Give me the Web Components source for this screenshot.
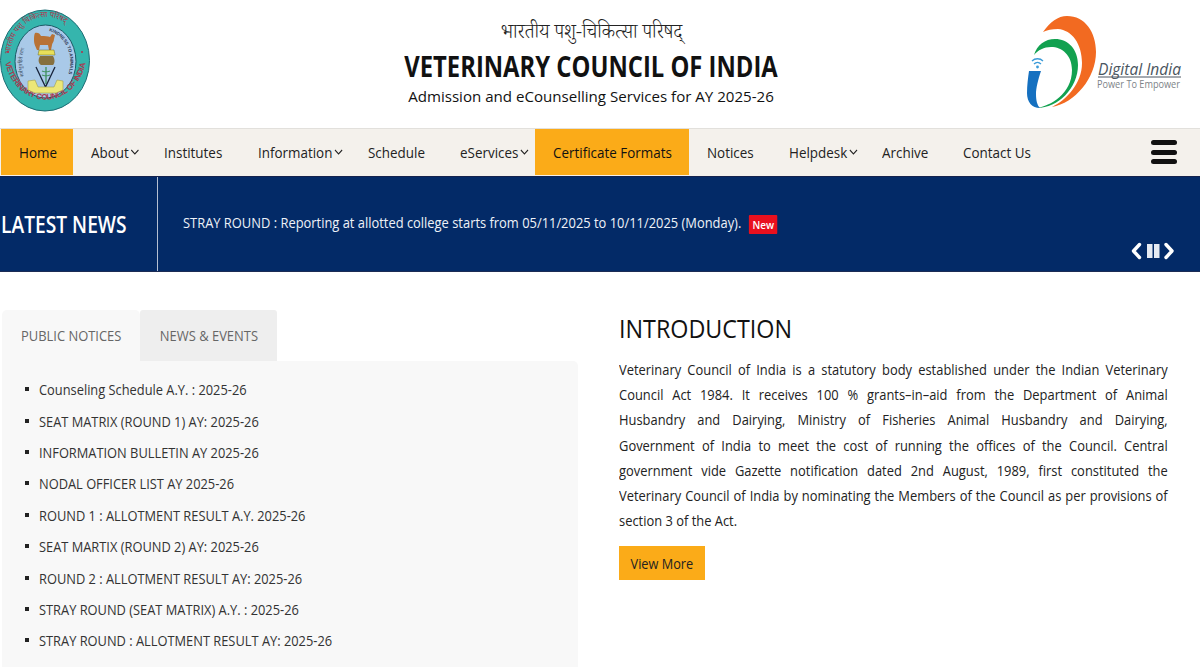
<!DOCTYPE html>
<html lang="en">
<head>
<meta charset="utf-8">
<title>Veterinary Council of India</title>
<style>
html, body { margin: 0; height: 100%; overflow: hidden; background: #fff; }
body { font-family: "Open Sans", "Noto Sans", sans-serif; color: #111; }
</style>
</head>
<body>
<vci-header></vci-header>
<vci-nav>
  <vci-nav-item w="72" accent>Home</vci-nav-item>
  <vci-nav-item w="73" caret>About</vci-nav-item>
  <vci-nav-item w="94">Institutes</vci-nav-item>
  <vci-nav-item w="110" caret>Information</vci-nav-item>
  <vci-nav-item w="92">Schedule</vci-nav-item>
  <vci-nav-item w="93" caret>eServices</vci-nav-item>
  <vci-nav-item w="154" accent>Certificate Formats</vci-nav-item>
  <vci-nav-item w="82">Notices</vci-nav-item>
  <vci-nav-item w="93" caret>Helpdesk</vci-nav-item>
  <vci-nav-item w="81">Archive</vci-nav-item>
  <vci-nav-item w="86">Contact Us</vci-nav-item>
</vci-nav>
<vci-ticker>STRAY ROUND : Reporting at allotted college starts from 05/11/2025 to 10/11/2025 (Monday).</vci-ticker>
<vci-main>
  <vci-tabs slot="left">
    <vci-notice>Counseling Schedule A.Y. : 2025-26</vci-notice>
    <vci-notice>SEAT MATRIX (ROUND 1) AY: 2025-26</vci-notice>
    <vci-notice>INFORMATION BULLETIN AY 2025-26</vci-notice>
    <vci-notice>NODAL OFFICER LIST AY 2025-26</vci-notice>
    <vci-notice>ROUND 1 : ALLOTMENT RESULT A.Y. 2025-26</vci-notice>
    <vci-notice>SEAT MARTIX (ROUND 2) AY: 2025-26</vci-notice>
    <vci-notice>ROUND 2 : ALLOTMENT RESULT AY: 2025-26</vci-notice>
    <vci-notice>STRAY ROUND (SEAT MATRIX) A.Y. : 2025-26</vci-notice>
    <vci-notice>STRAY ROUND : ALLOTMENT RESULT AY: 2025-26</vci-notice>
  </vci-tabs>
  <vci-intro slot="right">Veterinary Council of India is a statutory body established under the Indian Veterinary Council Act 1984. It receives 100 % grants–in–aid from the Department of Animal Husbandry and Dairying, Ministry of Fisheries Animal Husbandry and Dairying, Government of India to meet the cost of running the offices of the Council. Central government vide Gazette notification dated 2nd August, 1989, first constituted the Veterinary Council of India by nominating the Members of the Council as per provisions of section 3 of the Act.</vci-intro>
</vci-main>

<script>
class BaseElement extends HTMLElement {
    constructor() {
        super();
        this.attachShadow({ mode: 'open' });
    }

    render() {
        return '';
    }

    connectedCallback() {
        this.shadowRoot.innerHTML = `<style>${this.constructor.styles}</style>${this.render()}`;
    }
}

class VciHeader extends BaseElement {
    static get styles() {
        return `
        :host { display: flex; height: 128px; background: #fff; }
        .seal { width: 92px; height: 110px; margin-top: 5px; flex: none; }
        .titles { flex: 1; text-align: center; padding: 21px 0 0 70px; }
        .hi { font-family: "Noto Serif Devanagari", "Noto Sans Devanagari", "Noto Sans", "Liberation Serif", serif; font-size: 20px; line-height: 28px; font-weight: 300; color: #222; white-space: nowrap; }
        .hi span { display: inline-block; transform: scaleX(.95); }
        h1 { margin: -2px 0 0; font-size: 28px; line-height: 38px; font-weight: 700; color: #111; white-space: nowrap; transform: scaleX(.85); }
        .sub { margin-top: 1px; font-size: 15.100px; line-height: 20px; color: #111; white-space: nowrap; }
        .di { width: 170px; height: 105px; margin: 10px 10px 0 0; flex: none; }
        `;
    }

    render() {
        return `
        <svg class="seal" viewBox="0 5 92 110" aria-hidden="true">
            <defs>
                <path id="top" d="M10 58 A36 41 0 0 1 82 58"/>
                <path id="bot" d="M5 60 A41 47 0 0 0 86 60"/>
                <path id="inl" d="M24 76 A23 32 0 0 1 40 32"/>
                <path id="inr" d="M49 31 A26 32 0 0 1 66 80"/>
            </defs>
            <ellipse cx="45" cy="60.500" rx="44.500" ry="50.500" fill="#35b5ad" stroke="#1f6e75" stroke-width="1"/>
            <ellipse cx="45.500" cy="61.500" rx="30.500" ry="36.500" fill="#a9c9e8" stroke="#1d5a66" stroke-width="1"/>
            <text font-family="Noto Serif Devanagari, Noto Sans Devanagari, serif" font-size="8" fill="#b3314a"><textPath href="#top" startOffset="3%">भारतीय पशु चिकित्सा परिषद्</textPath></text>
            <text font-family="Liberation Sans" font-size="8" font-weight="700" fill="#a83a52" textLength="118"><textPath href="#bot" startOffset="2%">VETERINARY COUNCIL OF INDIA</textPath></text>
            <text font-family="Liberation Sans" font-size="4.500" font-weight="700" fill="#2a3350"><textPath href="#inr">KINDNESS TO ANIMALS</textPath></text>
            <text font-family="Noto Sans Devanagari, serif" font-size="5" fill="#345"><textPath href="#inl">सर्वभूतहिते रताः</textPath></text>
            <path d="M35 33c2-1 5 0 6 3 4 0 7 0 9 1l2-3 3 1-1 4c0 3-2 4-2 6l-1 5h-2l-1-5h-8l-1 5h-2c-1-3-3-5-3-10 0-3 0-5 1-7z" fill="#b87235"/>
            <path d="M39 50h15l1 5H38z" fill="#e8df5a" stroke="#6b6a2a" stroke-width=".5"/>
            <path d="M40 56h13c2 3 2 7 0 9H41c-3-2-3-6-1-9z" fill="#86703f"/>
            <path d="M46 67v17M42 71c2 1 6 1 8 0M42 75c2 1 6 1 8 0" fill="none" stroke="#3f8f5e" stroke-width="1.300"/>
            <path d="M36 67l9.500 20L55 67" fill="none" stroke="#17233a" stroke-width="1.300"/>
            <path d="M28 81l7-1 3 7h16l3-7 6 1v9l-7 3H35l-7-3z" fill="#ece778" stroke="#a3a04a" stroke-width=".6"/>
            <circle cx="8" cy="52" r="1" fill="#b3314a"/><circle cx="82" cy="52" r="1" fill="#b3314a"/>
        </svg>
        <div class="titles">
            <div class="hi"><span>भारतीय पशु-चिकित्सा परिषद्</span></div>
            <h1>VETERINARY COUNCIL OF INDIA</h1>
            <div class="sub">Admission and eCounselling Services for AY 2025-26</div>
        </div>
        <svg class="di" viewBox="1020 10 170 105" aria-hidden="true">
            <path d="M1043 32C1050 22 1058 16 1067 16C1085 16 1096 32 1096 52C1096 78 1075 103 1052 107C1066 100 1082 84 1082 63C1082 44 1072 30 1058 29C1052 29 1047 30 1043 32Z" fill="#f26a21"/>
            <path d="M1034 55C1037 45 1045 39 1055 39C1068 39 1078 49 1078 65C1078 88 1058 108 1037 108C1050 106 1072 94 1072 70C1072 55 1062 47 1051 47C1044 47 1038 50 1034 55Z" fill="#12a150"/>
            <path d="M1029 71L1041 71C1038 80 1036 88 1036 94C1036 100 1037 105 1040 108C1032 108 1027 102 1027 93C1027 85 1028 78 1029 71Z" fill="#1570c0"/>
            <path d="M1032 61c3-3 8-3 11 0M1034 64c2-2 5-2 7 0" fill="none" stroke="#3b9bd8" stroke-width="1.300"/>
            <circle cx="1037.500" cy="67" r="1.400" fill="#3b9bd8"/>
            <text x="1098" y="75" font-family="Open Sans" font-size="16" font-style="italic" fill="#4a5560" textLength="83" lengthAdjust="spacingAndGlyphs">Digital India</text>
            <path d="M1098 77h83" stroke="#4a5560" stroke-width="1"/>
            <text x="1097" y="88" font-family="Open Sans" font-size="10" fill="#7d8387" textLength="83" lengthAdjust="spacingAndGlyphs">Power To Empower</text>
        </svg>
        `;
    }
}

class VciNav extends BaseElement {
    static get styles() {
        return `
        :host { display: flex; height: 48px; align-items: stretch; box-sizing: border-box; padding: 0 0 1px 1px; background: #f4f1ec; border-top: 1px solid #e2e0dc; }
        .menu { width: 26px; height: 24px; margin: 11px 23px 0 auto; display: flex; flex-direction: column; justify-content: space-between; }
        .menu span { display: block; height: 5px; border-radius: 3px; background: #111; }
        `;
    }

    render() {
        return `<slot></slot><div class="menu"><span></span><span></span><span></span></div>`;
    }
}

class VciNavItem extends BaseElement {
    static get styles() {
        return `
        :host { display: flex; align-items: center; flex: none; box-sizing: border-box; padding: 0 0 1px 18px; font-size: 15px; color: #222; white-space: nowrap; }
        :host([accent]) { background: #fbab18; color: #111; }
        .sq { display: inline-flex; align-items: center; transform: scaleX(.895); transform-origin: left center; }
        svg { width: 10px; height: 6px; margin-left: 2px; margin-top: 1px; }
        `;
    }

    connectedCallback() {
        super.connectedCallback();
        this.style.width = this.getAttribute('w') + 'px';
    }

    render() {
        let caret = this.hasAttribute('caret')
            ? `<svg viewBox="0 0 10 6"><path d="M1 1l4 4 4-4" fill="none" stroke="#222" stroke-width="1.100"/></svg>`
            : '';
        return `<span class="sq"><slot></slot>${caret}</span>`;
    }
}

class VciTicker extends BaseElement {
    static get styles() {
        return `
        :host { display: flex; height: 96px; box-sizing: border-box; background: #032a67; border-top: 1px solid #14224d; border-bottom: 1px solid #1c2c55; color: #fff; position: relative; }
        .label { width: 158px; flex: none; box-sizing: border-box; border-right: 1px solid #b5bfd2; display: flex; align-items: center; font-size: 23px; font-weight: 600; padding-left: 1px; }
        .label span { transform: scaleX(.835); transform-origin: left center; white-space: nowrap; }
        .msg { display: flex; align-items: center; margin-left: 25px; padding-bottom: 4px; font-size: 15px; color: #eef2f8; white-space: nowrap; transform: scaleX(.86); transform-origin: left center; }
        .new { margin: 4px 0 0 9px; width: 33px; box-sizing: border-box; text-align: center; background: #e9101e; border-radius: 1px; color: #fff; font-size: 11.500px; font-weight: 600; line-height: 19px; }
        .ctrl { position: absolute; right: 25px; bottom: 11px; width: 44px; height: 18px; }
        `;
    }

    render() {
        return `
        <div class="label"><span>LATEST NEWS</span></div>
        <div class="msg"><span><slot></slot></span><span class="new">New</span></div>
        <svg class="ctrl" viewBox="0 0 44 18" aria-hidden="true">
            <path d="M8.500 2.500L2.500 9l6 6.500" fill="none" stroke="#fff" stroke-width="3.400" stroke-linecap="round" stroke-linejoin="round"/>
            <rect x="16" y="2" width="5.500" height="14" fill="#e6ebf3"/><rect x="23" y="2" width="5.500" height="14" fill="#e6ebf3"/>
            <path d="M35 2.500l6 6.500-6 6.500" fill="none" stroke="#fff" stroke-width="3.400" stroke-linecap="round" stroke-linejoin="round"/>
        </svg>
        `;
    }
}

class VciMain extends BaseElement {
    static get styles() {
        return `
        :host { display: grid; grid-template-columns: 578px 549px; column-gap: 41px; padding-top: 38px; height: 395px; box-sizing: border-box; overflow: hidden; }
        `;
    }

    render() {
        return `<slot name="left"></slot><slot name="right"></slot>`;
    }
}

class VciTabs extends BaseElement {
    static get styles() {
        return `
        :host { display: block; padding-left: 2px; font-size: 15px; }
        .tabs { display: flex; height: 51px; }
        .tab { display: flex; align-items: center; justify-content: center; box-sizing: border-box; padding-bottom: 2px; width: 138px; color: #666; background: #f8f8f8; border-radius: 5px 5px 0 0; }
        .tab span { transform: scaleX(.862); white-space: nowrap; }
        .tab + .tab { width: 137px; background: #eee; border-radius: 3px 3px 0 0; }
        .panel { background: #f8f8f8; border-radius: 0 5px 0 0; padding: 12.500px 0 0 23px; height: 320px; box-sizing: border-box; }
        `;
    }

    render() {
        return `
        <div class="tabs"><div class="tab"><span>PUBLIC NOTICES</span></div><div class="tab"><span>NEWS &amp; EVENTS</span></div></div>
        <div class="panel"><slot></slot></div>
        `;
    }
}

class VciNotice extends BaseElement {
    static get styles() {
        return `
        :host { display: flex; align-items: center; height: 31.400px; color: #333; white-space: nowrap; }
        i { width: 4px; height: 4px; background: #222; margin-right: 10px; flex: none; }
        span { transform: scaleX(.856); transform-origin: left center; }
        `;
    }

    render() {
        return `<i></i><span><slot></slot></span>`;
    }
}

class VciIntro extends BaseElement {
    static get styles() {
        return `
        :host { display: block; color: #222; }
        h2 { margin: 0 0 12px; font-size: 26px; line-height: 36px; font-weight: 500; color: #111; transform: scaleX(.896); transform-origin: left center; white-space: nowrap; }
        p { margin: -1px 0 1px; width: 638px; font-size: 15px; line-height: 25.200px; text-align: justify; transform: scaleX(.86); transform-origin: left top; }
        .more { display: flex; justify-content: center; width: 86px; margin-top: 13px; background: #fbab18; color: #222; font-size: 15px; line-height: 34px; }
        .more span { transform: scaleX(.85); white-space: nowrap; }
        `;
    }

    render() {
        return `<h2>INTRODUCTION</h2><p><slot></slot></p><div class="more"><span>View More</span></div>`;
    }
}

customElements.define('vci-header', VciHeader);
customElements.define('vci-nav', VciNav);
customElements.define('vci-nav-item', VciNavItem);
customElements.define('vci-ticker', VciTicker);
customElements.define('vci-main', VciMain);
customElements.define('vci-tabs', VciTabs);
customElements.define('vci-notice', VciNotice);
customElements.define('vci-intro', VciIntro);
</script>
</body>
</html>
